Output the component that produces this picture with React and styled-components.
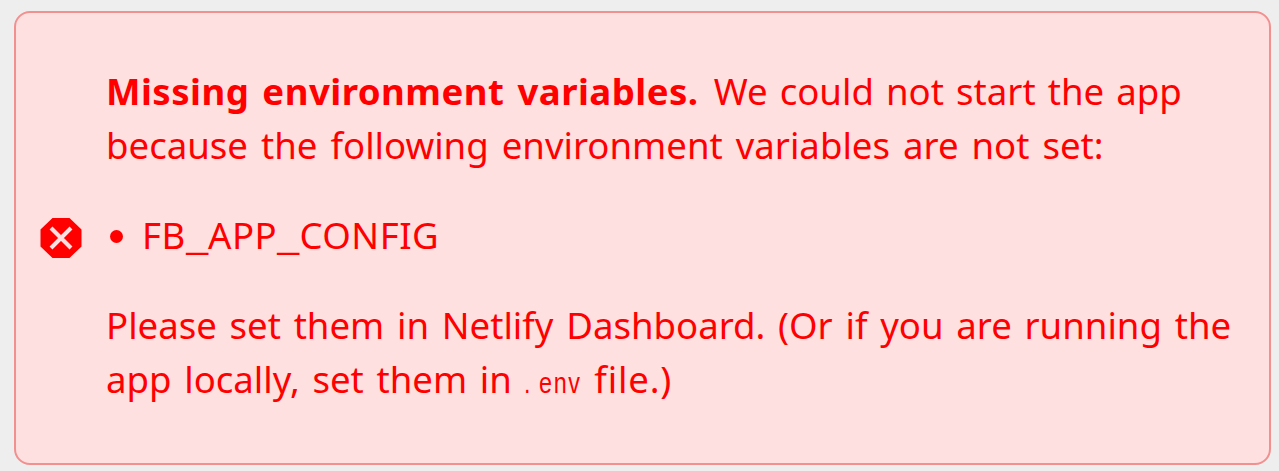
import React from "react";
import styled, { createGlobalStyle } from "styled-components";

const GlobalStyle = createGlobalStyle`
  * { box-sizing: border-box; }
  body { margin: 0; background: #eeeeee; overflow: hidden; }
`;
const Page = styled.main`
  height: 471px;
  padding: 11px 8px 6px 14px;
`;
const Alert = styled.section`
  height: 454px;
  display: flex;
  align-items: center;
  padding: 0 24px;
  border: 2px solid #f29090;
  border-radius: 16px;
  background: #fee0e0;
  color: #ff0000;
  font: 400 36.6px/54px "Noto Sans", sans-serif;
`;
const ErrorIcon = styled.svg`
  flex: none;
  width: 42px;
  height: 42px;
  margin-right: 24px;
`;
const Content = styled.div`
  display: flex;
  flex-direction: column;
  gap: 36px;
  padding-bottom: 6px;
  white-space: nowrap;
`;
const Paragraph = styled.p`
  margin: 0;
`;
const Line = styled.span`
  display: block;
  width: max-content;
  height: 54px;
  letter-spacing: ${(p) => p.$spacing ?? 0}px;
  word-spacing: ${(p) => p.$words ?? 3.5}px;
`;
const Title = styled.strong`
  font-weight: 700;
  letter-spacing: 0.46px;
  word-spacing: 3.2px;
  margin-right: 3px;
`;
const List = styled.ul`
  margin: 0;
  padding: 0;
  list-style: none;
`;
const Item = styled.li`
  display: flex;
  align-items: center;
  &::before {
    content: "";
    width: 13px;
    height: 13px;
    margin: 2px 19px 0 4px;
    border-radius: 50%;
    background: currentColor;
  }
`;
const Underscore = styled.span`
  display: inline-block;
  transform: scaleX(1.38);
  margin: 0 3px;
  letter-spacing: 0;
`;
const Code = styled.code`
  display: inline-block;
  width: 58px;
  margin-left: -1px;
  font: 400 30px/1 "Liberation Sans", sans-serif;
  letter-spacing: 2px;
  transform: scaleX(0.78);
  transform-origin: left;
`;
const Dot = styled.span`
  letter-spacing: 11px;
`;
const FileWord = styled.span`
  letter-spacing: 0.8px;
  font-variant-ligatures: common-ligatures;
`;

export default function App() {
  return (
    <Page>
      <GlobalStyle />
      <Alert role="alert">
        <ErrorIcon viewBox="0 0 42 42" aria-hidden="true">
          <path d="M12.5 1h17L41.5 12.5v17L29.5 41h-17L.5 29.5v-17z" fill="#f00" />
          <path d="M11 11l20 20M31 11L11 31" stroke="#fee0e0" strokeWidth="4" />
        </ErrorIcon>
        <Content>
          <Paragraph>
            <Line $words={2.6}><Title>Missing environment variables.</Title> We could not start the app</Line>
            <Line>because the following environment variables are not set:</Line>
          </Paragraph>
          <List>
            <Item>
              <Line $spacing={0.5}>FB<Underscore>_</Underscore>APP<Underscore>_</Underscore>CONFIG</Line>
            </Item>
          </List>
          <Paragraph>
            <Line $words={3.2}>Please set them in Netlify Dashboard. (Or if you are running the</Line>
            <Line $words={3.2}>app locally, set them in <Code><Dot>.</Dot>env</Code> <FileWord>file.)</FileWord></Line>
          </Paragraph>
        </Content>
      </Alert>
    </Page>
  );
}
